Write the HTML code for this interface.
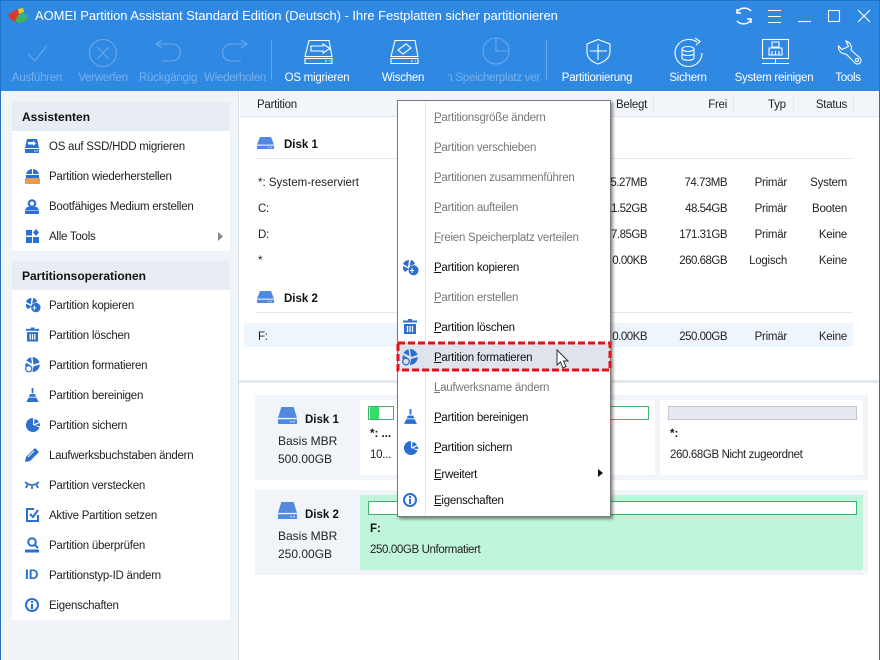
<!DOCTYPE html>
<html><head><meta charset="utf-8"><style>
html,body{margin:0;padding:0}
body{width:880px;height:660px;overflow:hidden;position:relative;background:#fff;font:11.5px "Liberation Sans",sans-serif;letter-spacing:-.25px;color:#222}
.a{position:absolute}
.t{position:absolute;white-space:nowrap;line-height:16px;height:16px;margin-top:1px}
.c{transform:translateX(-50%)}
.r{transform:translateX(-100%)}
.b{font-weight:bold;color:#111;letter-spacing:0}
.h{font-size:12px;margin-top:0}
.n{letter-spacing:-.5px}
.m{letter-spacing:-.38px}
.z{font-size:12px;letter-spacing:0;margin-top:0}
.w{color:#fff}.d{color:#78b0ec}
.g{color:#777}.k{color:#111}
svg{position:absolute;overflow:visible}
u{text-underline-offset:1px}
</style></head><body>
<svg width="0" height="0" style="position:absolute"><defs>
<symbol id="disk" viewBox="0 0 20 18" preserveAspectRatio="none" overflow="visible"><path fill="#4f8ae0" d="M3.500 0H16.500L20 11.500H0Z"/><path fill="#4f8ae0" d="M0 13H20V18H0Z"/><path fill="#fff" d="M13 15H14.500V16.200H13ZM16 15H17.500V16.200H16Z"/></symbol>
<symbol id="copy" viewBox="0 0 16 16" overflow="visible"><path fill="#2b6fd0" d="M7 1A7 7 0 0 0 1 5L6 8ZM9 .8 7.500 7 13 5A7 7 0 0 0 9 .8ZM1 7A7 7 0 0 0 3 13L7 10ZM10 6.500A5 5 0 1 1 10 16 5 5 0 0 1 10 6.500Z"/><path stroke="#fff" fill="none" d="M10 9V14M8 11.500H12"/></symbol>
<symbol id="trash" viewBox="0 0 14 15" overflow="visible"><path fill="#2b6fd0" d="M5 0H9V1.500H14V3.500H0V1.500H5ZM1 5H13V15H1Z"/><path stroke="#fff" stroke-width="1.300" d="M4.500 7V13M7 7V13M9.500 7V13"/></symbol>
<symbol id="fmt" viewBox="0 0 16 16" overflow="visible"><path fill="#2b6fd0" d="M8 0A8 8 0 0 1 15.500 6L9 8ZM6.500 .2 7.500 7 1.500 4A8 8 0 0 1 6.500 .2ZM1 6 6 9 3 10A6 6 0 0 0 .4 10 8 8 0 0 1 1 6ZM9 10 15.800 8A8 8 0 0 1 8 16Z"/><circle cx="4" cy="12.500" r="3.300" fill="none" stroke="#2b6fd0" stroke-width="1.300"/></symbol>
<symbol id="broom" viewBox="0 0 14 16" overflow="visible"><path fill="#2b6fd0" d="M6 0H8V6H6ZM4 7H10L11 10H3ZM2.500 11H11.500L14 16H0Z"/></symbol>
<symbol id="pie" viewBox="0 0 14 14" overflow="visible"><path fill="#2b6fd0" d="M7 0A7 7 0 1 0 13.500 9.500L7 7ZM8.500 1 8 6 13 4A6 6 0 0 0 8.500 1ZM8.500 7.500 14 8A7 7 0 0 0 13.600 5Z"/></symbol>
<symbol id="info" viewBox="0 0 14 14" overflow="visible"><circle cx="7" cy="7" r="6" fill="none" stroke="#2b6fd0" stroke-width="2"/><path fill="#2b6fd0" d="M6 3H8V5H6ZM6 6H8V11H6Z"/></symbol>
</defs></svg>

<!-- title + toolbar -->
<div class="a" style="left:0;top:0;width:880px;height:91px;background:#2f89e3;border-top:1px solid #1f72c4;box-sizing:border-box"></div>
<svg style="left:7px;top:7px" width="22" height="18"><path fill="#d93a30" d="M1 8 8 3 12 2 13 7 9 15 3 12Z"/><path fill="#f0c92c" d="M11 2 16 1 17 5 12 7Z"/><path fill="#42b649" d="M11 8 15 5 21 8 20 13 12 16 8 14Z"/><path fill="#3b9ddd" d="M13 8 18 7 19 10 14 11Z"/></svg>
<div class="t w" style="left:35px;top:8px;margin-top:0;font-size:13px;letter-spacing:-.05px">AOMEI Partition Assistant Standard Edition (Deutsch) - Ihre Festplatten sicher partitionieren</div>

<svg style="left:0;top:0" width="880" height="91" fill="none" stroke="#fff" stroke-width="1.100">
<path d="M751 11A9 9 0 0 0 737 12M737 9V13H741M737 21A9 9 0 0 0 751 20M751 23V19H747" stroke-width="1.500"/>
<path d="M768 10.500H781M768 16.500H781M768 22.500H781"/>
<path d="M798 21.500H811"/>
<rect x="828.500" y="10.500" width="11" height="11"/>
<path d="M858 10 870 22M870 10 858 22"/>
<g stroke="#6aa6e9">
<path d="M28 54 35 61 47 45"/>
<circle cx="103" cy="53" r="13.500"/><path d="M97 47 109 59M109 47 97 59"/>
<path d="M157 44H172A8 8 0 0 1 172 61H162M162 40 156 44 162 48"/>
<path d="M247 44H231A8 8 0 0 0 231 61H241M241 40 247 44 241 48"/>
<path d="M271.500 40V80"/>
<circle cx="496" cy="51" r="13"/><path d="M496 38V51H509"/>
<path d="M546.500 40V80"/>
</g>
<path d="M309 40.500H329L332 56.500H305ZM305 58.500H332V63.500H305Z"/>
<path d="M311 46H323V44L330 48.500 323 53V51H311Z"/>
<path d="M325 61H327M329 61H330"/>
<path d="M395 40.500H415L418 56.500H391ZM391 58.500H418V63.500H391Z"/>
<path d="M398 50 406 44 411 48 403 54Z"/><path d="M411 61H413M415 61H416"/>
<path d="M587 44 598 39.500 610 44V52C610 58 604 62 598 64 592 62 587 58 587 52ZM598 44V60M590 51H607"/>
<path d="M697 42A14 14 0 0 0 688 39.500 13.500 13.500 0 1 0 702 53"/><path d="M695 38 700 41.500 696 45" /><ellipse cx="688" cy="49" rx="6" ry="2.500"/><path d="M682 49V58C682 61 694 61 694 58V49M682 53.500C682 56 694 56 694 53.500"/>
<rect x="762.500" y="39.500" width="26" height="19"/><path d="M762 63.500H789M775.500 59V63M772 42H779V47H772ZM769 48H782V55H769ZM772 55V51M775.500 55V51M779 55V51"/>
<path d="M846 41A7 7 0 0 1 851 50L860 58A3.500 3.500 0 0 1 855 63L846 54A7 7 0 0 1 838.500 46L842 49.500 848.500 46.500Z" stroke-width="1.100"/><circle cx="857" cy="60" r="1.500"/>
</svg>

<div class="t c d" style="left:37px;top:69px">Ausführen</div>
<div class="t c d" style="left:103px;top:69px">Verwerfen</div>
<div class="t c d" style="left:168px;top:69px">Rückgängig</div>
<div class="t c d" style="left:235px;top:69px">Wiederholen</div>
<div class="t c w" style="left:317px;top:69px">OS migrieren</div>
<div class="t c w" style="left:403px;top:69px">Wischen</div>
<div class="t d" style="left:448px;top:69px;width:92px;overflow:hidden"><span style="position:absolute;right:0">Freien Speicherplatz ver</span></div>
<div class="t c w" style="left:597px;top:69px">Partitionierung</div>
<div class="t c w" style="left:688px;top:69px">Sichern</div>
<div class="t c w" style="left:774px;top:69px">System reinigen</div>
<div class="t c w" style="left:848px;top:69px">Tools</div>

<!-- sidebar -->
<div class="a" style="left:0;top:91px;width:238px;height:569px;background:#f0f4f9;border-right:1px solid #d9dfe7"></div>
<div class="a" style="left:0;top:0;width:1px;height:660px;background:#1f72c4"></div>
<div class="a" style="left:879px;top:0;width:1px;height:660px;background:#1f72c4"></div>
<div class="a" style="left:12px;top:102px;width:218px;height:149px;background:#fff"></div>
<div class="a" style="left:12px;top:102px;width:218px;height:29px;background:#e8edf4"></div>
<div class="a" style="left:12px;top:261px;width:218px;height:359px;background:#fff"></div>
<div class="a" style="left:12px;top:261px;width:218px;height:29px;background:#e8edf4"></div>
<div class="t b h" style="left:22px;top:109px">Assistenten</div>
<div class="t b h" style="left:22px;top:268px">Partitionsoperationen</div>

<svg style="left:25px;top:139px" width="14" height="14" viewBox="0 0 14 14"><path fill="#2b6fd0" d="M2 0H12L14 9H0ZM0 10H14V14H0Z"/><path fill="#fff" d="M3 3H8V1.500L11 4.500 8 7V5.500H3ZM9 11.500H10.500V12.500H9ZM11.500 11.500H13V12.500H11.500Z"/></svg>
<svg style="left:25px;top:169px" width="15" height="15" viewBox="0 0 15 15"><path fill="#2b6fd0" d="M7 0V5H1A7 7 0 0 1 7 0ZM8 0A7 7 0 0 1 14 5H8ZM1 6H14V9H1Z"/><rect y="9" width="15" height="6" fill="#e89a50"/></svg>
<svg style="left:25px;top:199px" width="14" height="15" viewBox="0 0 14 15"><circle cx="7" cy="4.500" r="3.200" fill="none" stroke="#2b6fd0" stroke-width="2.200"/><path fill="#2b6fd0" d="M2 8H12L14 11H0ZM0 11.500H14V15H0Z"/></svg>
<svg style="left:26px;top:229px" width="13" height="14" viewBox="0 0 13 14"><path fill="#2b6fd0" d="M0 1H6V6.500H0ZM7 8H13V14H7ZM0 8H6V14H0ZM10 0 13 3.500 10 7 7 3.500Z"/></svg>
<svg style="left:218px;top:232px" width="6" height="9"><path fill="#888" d="M0 0 5 4.500 0 9Z"/></svg>

<svg style="left:25px;top:297px" width="15" height="15"><use href="#copy" width="15" height="15"/></svg>
<svg style="left:26px;top:327px" width="13" height="15"><use href="#trash" width="13" height="15"/></svg>
<svg style="left:25px;top:357px" width="15" height="15"><use href="#fmt" width="15" height="15"/></svg>
<svg style="left:26px;top:388px" width="13" height="14"><use href="#broom" width="13" height="14"/></svg>
<svg style="left:26px;top:418px" width="14" height="14"><use href="#pie" width="14" height="14"/></svg>
<svg style="left:25px;top:448px" width="14" height="14" viewBox="0 0 14 14"><path fill="#2b6fd0" d="M10 0 14 4 5 13 0 14 1 9Z"/><path stroke="#fff" d="M3 9 9 3"/></svg>
<svg style="left:25px;top:481px" width="14" height="8" viewBox="0 0 14 8" fill="none" stroke="#2b6fd0" stroke-width="1.800"><path d="M0 1Q7 7 14 1M7 5V8M3 3 1 7M11 3 13 7"/></svg>
<svg style="left:26px;top:508px" width="13" height="14" viewBox="0 0 13 14" fill="none" stroke="#2b6fd0" stroke-width="2"><path d="M8 1H1V13H12V7M4 6 7 9 12 2"/></svg>
<svg style="left:25px;top:537px" width="14" height="16" viewBox="0 0 14 16"><circle cx="7" cy="5" r="3.800" fill="none" stroke="#2b6fd0" stroke-width="2"/><path stroke="#2b6fd0" stroke-width="2" d="M10 8 13 11"/><path fill="#2b6fd0" d="M0 12.500H14V15.500H0Z"/></svg>
<div class="t" style="left:25px;top:567px;margin-top:0;font-weight:bold;font-size:13.500px;letter-spacing:0;color:#2b6fd0">ID</div>
<svg style="left:25px;top:598px" width="14" height="14"><use href="#info" width="14" height="14"/></svg>

<div class="t" style="left:49px;top:138px">OS auf SSD/HDD migrieren</div>
<div class="t" style="left:49px;top:168px">Partition wiederherstellen</div>
<div class="t" style="left:49px;top:198px">Bootfähiges Medium erstellen</div>
<div class="t" style="left:49px;top:228px">Alle Tools</div>
<div class="t" style="left:49px;top:297px">Partition kopieren</div>
<div class="t" style="left:49px;top:327px">Partition löschen</div>
<div class="t" style="left:49px;top:357px">Partition formatieren</div>
<div class="t" style="left:49px;top:387px">Partition bereinigen</div>
<div class="t" style="left:49px;top:417px">Partition sichern</div>
<div class="t" style="left:49px;top:447px">Laufwerksbuchstaben ändern</div>
<div class="t" style="left:49px;top:477px">Partition verstecken</div>
<div class="t" style="left:49px;top:507px">Aktive Partition setzen</div>
<div class="t" style="left:49px;top:537px">Partition überprüfen</div>
<div class="t" style="left:49px;top:567px">Partitionstyp-ID ändern</div>
<div class="t" style="left:49px;top:597px">Eigenschaften</div>

<!-- table -->
<div class="a" style="left:240px;top:91px;width:639px;height:25px;background:#f2f6fb;border-bottom:1px solid #dfe4eb"></div>
<div class="a" style="left:653px;top:96px;width:1px;height:16px;background:#e3e8ee"></div>
<div class="a" style="left:733px;top:96px;width:1px;height:16px;background:#e3e8ee"></div>
<div class="a" style="left:793px;top:96px;width:1px;height:16px;background:#e3e8ee"></div>
<div class="a" style="left:853px;top:96px;width:1px;height:16px;background:#e3e8ee"></div>
<div class="t" style="left:257px;top:96px">Partition</div>
<div class="t" style="left:616px;top:96px">Belegt</div>
<div class="t r" style="left:727px;top:96px">Frei</div>
<div class="t" style="left:768px;top:96px">Typ</div>
<div class="t r" style="left:847px;top:96px">Status</div>

<svg style="left:257px;top:137px" width="17" height="12"><use href="#disk" width="17" height="12"/></svg>
<div class="t b" style="left:284px;top:136px">Disk 1</div>
<div class="a" style="left:256px;top:158px;width:597px;height:1px;background:#e3e8ee"></div>
<svg style="left:257px;top:291px" width="17" height="12"><use href="#disk" width="17" height="12"/></svg>
<div class="t b" style="left:284px;top:290px">Disk 2</div>
<div class="a" style="left:256px;top:312px;width:597px;height:1px;background:#e3e8ee"></div>
<div class="a" style="left:244px;top:323px;width:609px;height:24px;background:#eef5fc"></div>

<div class="t" style="left:258px;top:174px;letter-spacing:0">*: System-reserviert</div>
<div class="t" style="left:258px;top:200px">C:</div>
<div class="t" style="left:258px;top:226px">D:</div>
<div class="t" style="left:258px;top:252px">*</div>
<div class="t" style="left:258px;top:328px">F:</div>

<div class="t r n" style="left:647px;top:174px">25.27MB</div><div class="t r n" style="left:727px;top:174px">74.73MB</div><div class="t r" style="left:787px;top:174px">Primär</div><div class="t r" style="left:847px;top:174px">System</div>
<div class="t r n" style="left:647px;top:200px">11.52GB</div><div class="t r n" style="left:727px;top:200px">48.54GB</div><div class="t r" style="left:787px;top:200px">Primär</div><div class="t r" style="left:847px;top:200px">Booten</div>
<div class="t r n" style="left:647px;top:226px">7.85GB</div><div class="t r n" style="left:727px;top:226px">171.31GB</div><div class="t r" style="left:787px;top:226px">Primär</div><div class="t r" style="left:847px;top:226px">Keine</div>
<div class="t r n" style="left:647px;top:252px">0.00KB</div><div class="t r n" style="left:727px;top:252px">260.68GB</div><div class="t r" style="left:787px;top:252px">Logisch</div><div class="t r" style="left:847px;top:252px">Keine</div>
<div class="t r n" style="left:647px;top:328px">0.00KB</div><div class="t r n" style="left:727px;top:328px">250.00GB</div><div class="t r" style="left:787px;top:328px">Primär</div><div class="t r" style="left:847px;top:328px">Keine</div>

<!-- lower pane -->
<div class="a" style="left:239px;top:380px;width:640px;height:3px;background:#e3e8ef"></div>
<div class="a" style="left:255px;top:395px;width:613px;height:85px;background:#f1f5fa"></div>
<div class="a" style="left:255px;top:490px;width:613px;height:85px;background:#f1f5fa"></div>
<svg style="left:278px;top:407px" width="19" height="17"><use href="#disk" width="19" height="17"/></svg>
<svg style="left:278px;top:502px" width="19" height="17"><use href="#disk" width="19" height="17"/></svg>
<div class="t b" style="left:305px;top:411px">Disk 1</div>
<div class="t b" style="left:305px;top:506px">Disk 2</div>
<div class="t z" style="left:278px;top:433px">Basis MBR</div>
<div class="t z" style="left:278px;top:451px">500.00GB</div>
<div class="t z" style="left:278px;top:528px">Basis MBR</div>
<div class="t z" style="left:278px;top:546px">250.00GB</div>

<div class="a" style="left:360px;top:400px;width:40px;height:75px;background:#fff"></div>
<div class="a" style="left:368px;top:406px;width:26px;height:14px;border:1px solid #3cb371;box-sizing:border-box;background:#fff"><div style="width:9px;height:12px;background:#36dc6a;margin-left:1px"></div></div>
<div class="t b" style="left:370px;top:425px">*: ...</div>
<div class="t" style="left:370px;top:446px">10...</div>
<div class="a" style="left:400px;top:400px;width:255px;height:75px;background:#fff"></div>
<div class="a" style="left:400px;top:406px;width:249px;height:14px;border:1px solid #3cb371;box-sizing:border-box;background:#fff"></div>
<div class="a" style="left:660px;top:400px;width:203px;height:75px;background:#fff"></div>
<div class="a" style="left:668px;top:406px;width:189px;height:14px;border:1px solid #c3c7cc;box-sizing:border-box;background:#e6e9ef"></div>
<div class="t b" style="left:670px;top:425px">*:</div>
<div class="t m" style="left:670px;top:446px">260.68GB Nicht zugeordnet</div>
<div class="a" style="left:360px;top:495px;width:503px;height:75px;background:#c0f5d9"></div>
<div class="a" style="left:368px;top:501px;width:489px;height:14px;border:1px solid #3cb371;box-sizing:border-box;background:#fff"></div>
<div class="t b" style="left:370px;top:520px">F:</div>
<div class="t m" style="left:370px;top:541px">250.00GB Unformatiert</div>

<!-- context menu -->
<div class="a" style="left:397px;top:100px;width:214px;height:417px;box-sizing:border-box;background:#fff;border:1px solid #7a7a7a;box-shadow:2px 2px 3px rgba(0,0,0,.45)"></div>
<div class="a" style="left:425px;top:101px;width:1px;height:415px;background:#e6e8eb"></div>
<div class="a" style="left:398px;top:343px;width:212px;height:28px;background:#dfe4ec"></div>
<svg style="left:396px;top:341px" width="216" height="31" fill="none"><rect x="2" y="2" width="212" height="27" stroke="#e0101c" stroke-width="3" stroke-dasharray="7 3"/></svg>

<svg style="left:402px;top:259px" width="16" height="16"><use href="#copy" width="16" height="16"/></svg>
<svg style="left:403px;top:319px" width="14" height="15"><use href="#trash" width="14" height="15"/></svg>
<svg style="left:402px;top:349px" width="16" height="16"><use href="#fmt" width="16" height="16"/></svg>
<svg style="left:404px;top:409px" width="13" height="15"><use href="#broom" width="13" height="15"/></svg>
<svg style="left:404px;top:441px" width="14" height="14"><use href="#pie" width="14" height="14"/></svg>
<svg style="left:403px;top:493px" width="14" height="14"><use href="#info" width="14" height="14"/></svg>

<div class="t g" style="left:434px;top:109px"><u>P</u>artitionsgröße ändern</div>
<div class="t g" style="left:434px;top:139px"><u>P</u>artition verschieben</div>
<div class="t g" style="left:434px;top:169px"><u>P</u>artitionen zusammenführen</div>
<div class="t g" style="left:434px;top:199px"><u>P</u>artition aufteilen</div>
<div class="t g" style="left:434px;top:229px"><u>F</u>reien Speicherplatz verteilen</div>
<div class="t k" style="left:434px;top:259px"><u>P</u>artition kopieren</div>
<div class="t g" style="left:434px;top:289px"><u>P</u>artition erstellen</div>
<div class="t k" style="left:434px;top:319px"><u>P</u>artition löschen</div>
<div class="t k" style="left:434px;top:349px"><u>P</u>artition formatieren</div>
<div class="t g" style="left:434px;top:379px"><u>L</u>aufwerksname ändern</div>
<div class="t k" style="left:434px;top:409px"><u>P</u>artition bereinigen</div>
<div class="t k" style="left:434px;top:439px"><u>P</u>artition sichern</div>
<div class="t k" style="left:434px;top:466px"><u>E</u>rweitert</div>
<div class="t k" style="left:434px;top:492px"><u>E</u>igenschaften</div>
<svg style="left:598px;top:469px" width="5" height="8"><path fill="#111" d="M0 0 5 4 0 8Z"/></svg>

<svg style="left:556px;top:349px" width="14" height="22"><path fill="#fff" stroke="#333" d="M1 1V16L4.500 13 7 19 10 17.500 7.500 12H12Z"/></svg>
</body></html>
